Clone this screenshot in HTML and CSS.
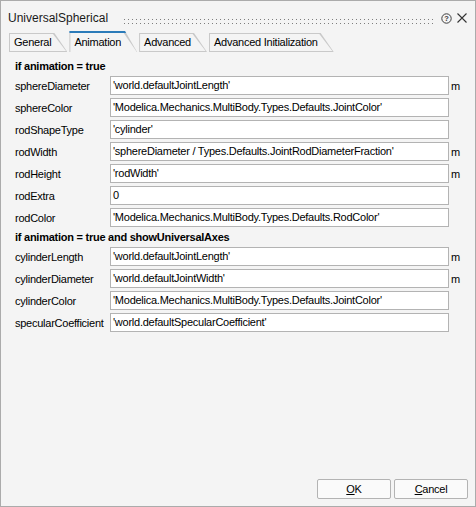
FILE: index.html
```html
<!DOCTYPE html>
<html>
<head>
<meta charset="utf-8">
<link rel="stylesheet" href="styles.css">
</head>
<body>
<div class="window">
  <div class="titlebar">
    <span class="title">UniversalSpherical</span>
    <svg class="grip" height="5">
      <defs>
        <pattern id="dots" width="4" height="4" patternUnits="userSpaceOnUse">
          <rect width="1" height="1" fill="#7e7e7e"/>
        </pattern>
      </defs>
      <rect width="100%" height="5" fill="url(#dots)"/>
    </svg>
    <svg class="help" width="11" height="11" viewBox="0 0 11 11">
      <circle cx="5.5" cy="5.5" r="4.7" fill="none" stroke="#3c3c3c" stroke-width="1"/>
      <text x="5.5" y="8.3" text-anchor="middle" font-family="Liberation Sans, Arial, sans-serif" font-size="7.5" font-weight="bold" fill="#3c3c3c">?</text>
    </svg>
    <svg class="close" width="10" height="10" viewBox="0 0 10 10">
      <path d="M0.5 0.5 L9.5 9.5 M9.5 0.5 L0.5 9.5" stroke="#333" stroke-width="1.1" fill="none"/>
    </svg>
  </div>

  <div class="tabs">
    <div class="tab"><span>General</span></div>
    <div class="tab active"><span>Animation</span></div>
    <div class="tab"><span>Advanced</span></div>
    <div class="tab"><span>Advanced Initialization</span></div>
  </div>

  <div class="panel">
    <div class="section">if animation = true</div>
    <div class="row"><span class="label">sphereDiameter</span><div class="field">'world.defaultJointLength'</div><span class="unit">m</span></div>
    <div class="row"><span class="label">sphereColor</span><div class="field">'Modelica.Mechanics.MultiBody.Types.Defaults.JointColor'</div><span class="unit"></span></div>
    <div class="row"><span class="label">rodShapeType</span><div class="field">'cylinder'</div><span class="unit"></span></div>
    <div class="row"><span class="label">rodWidth</span><div class="field">'sphereDiameter / Types.Defaults.JointRodDiameterFraction'</div><span class="unit">m</span></div>
    <div class="row"><span class="label">rodHeight</span><div class="field">'rodWidth'</div><span class="unit">m</span></div>
    <div class="row"><span class="label">rodExtra</span><div class="field">0</div><span class="unit"></span></div>
    <div class="row"><span class="label">rodColor</span><div class="field">'Modelica.Mechanics.MultiBody.Types.Defaults.RodColor'</div><span class="unit"></span></div>
    <div class="section second">if animation = true and showUniversalAxes</div>
    <div class="row"><span class="label">cylinderLength</span><div class="field">'world.defaultJointLength'</div><span class="unit">m</span></div>
    <div class="row"><span class="label">cylinderDiameter</span><div class="field">'world.defaultJointWidth'</div><span class="unit">m</span></div>
    <div class="row"><span class="label">cylinderColor</span><div class="field">'Modelica.Mechanics.MultiBody.Types.Defaults.JointColor'</div><span class="unit"></span></div>
    <div class="row"><span class="label">specularCoefficient</span><div class="field">'world.defaultSpecularCoefficient'</div><span class="unit"></span></div>
  </div>

  <div class="footer">
    <button class="btn"><u>O</u>K</button>
    <button class="btn"><u>C</u>ancel</button>
  </div>
</div>
</body>
</html>
```

FILE: styles.css
```css
* {
  box-sizing: border-box;
}

body {
  margin: 0;
  font-family: "Liberation Sans", Arial, sans-serif;
  font-size: 11px;
  letter-spacing: -0.25px;
  color: #000;
}

.window {
  width: 476px;
  height: 507px;
  border: 1px solid #ababab;
  background: #f4f4f4;
  display: flex;
  flex-direction: column;
}

.titlebar {
  height: 30px;
  padding: 4px 8px 0 7px;
  display: flex;
  align-items: center;
}

.title {
  font-size: 12px;
  letter-spacing: 0;
  color: #1a1a1a;
}

.grip {
  flex: 1;
  height: 5px;
  align-self: flex-start;
  margin: 14px 7px 0 16px;
}

.help {
  margin-right: 5px;
}

.close {
  display: block;
}

.tabs {
  display: flex;
  align-items: flex-end;
  height: 21px;
  padding-left: 8px;
  gap: 2px;
}

.tab {
  height: 19px;
  padding: 1px 0 1px 1px;
  background: #c9c9c9;
  clip-path: polygon(0 0, calc(100% - 13px) 0, 100% 100%, 0 100%);
}

.tab span {
  display: block;
  height: 100%;
  padding: 0 16px 0 4px;
  line-height: 17px;
  background: #f4f4f4;
  white-space: nowrap;
  clip-path: polygon(0 0, calc(100% - 14.4px) 0, calc(100% - 1.4px) 100%, 0 100%);
}

.tab.active {
  height: 21px;
  padding: 2px 0 0 1px;
  background: linear-gradient(#2b7bb9 0 2px, #c9c9c9 2px);
  clip-path: polygon(0 0, calc(100% - 12px) 0, 100% 100%, 0 100%);
}

.tab.active span {
  line-height: 18px;
  clip-path: polygon(0 0, calc(100% - 13.4px) 0, calc(100% - 0.2px) 100%, 0 100%);
}

.panel {
  flex: 1;
  padding: 6px 0 0 14px;
}

.section {
  font-weight: bold;
  height: 17px;
  line-height: 17px;
  margin-bottom: 1px;
}

.section.second {
  margin-top: -1px;
}

.row {
  display: grid;
  grid-template-columns: 93px 339px auto;
  column-gap: 2px;
  align-items: center;
  height: 19px;
  margin-bottom: 3px;
}

.label {
  white-space: nowrap;
}

.field {
  height: 19px;
  border: 1px solid #b3b3b3;
  background: #fff;
  padding: 0 2px;
  line-height: 17px;
  white-space: nowrap;
  overflow: hidden;
}

.footer {
  display: flex;
  justify-content: flex-end;
  gap: 3px;
  padding: 0 7px 7px 0;
}

.btn {
  width: 74px;
  height: 20px;
  border: 1px solid #b3b3b3;
  border-radius: 2px;
  background: #fafafa;
  font-family: "Liberation Sans", Arial, sans-serif;
  font-size: 11px;
  letter-spacing: -0.25px;
  color: #000;
  padding: 0;
}
```
